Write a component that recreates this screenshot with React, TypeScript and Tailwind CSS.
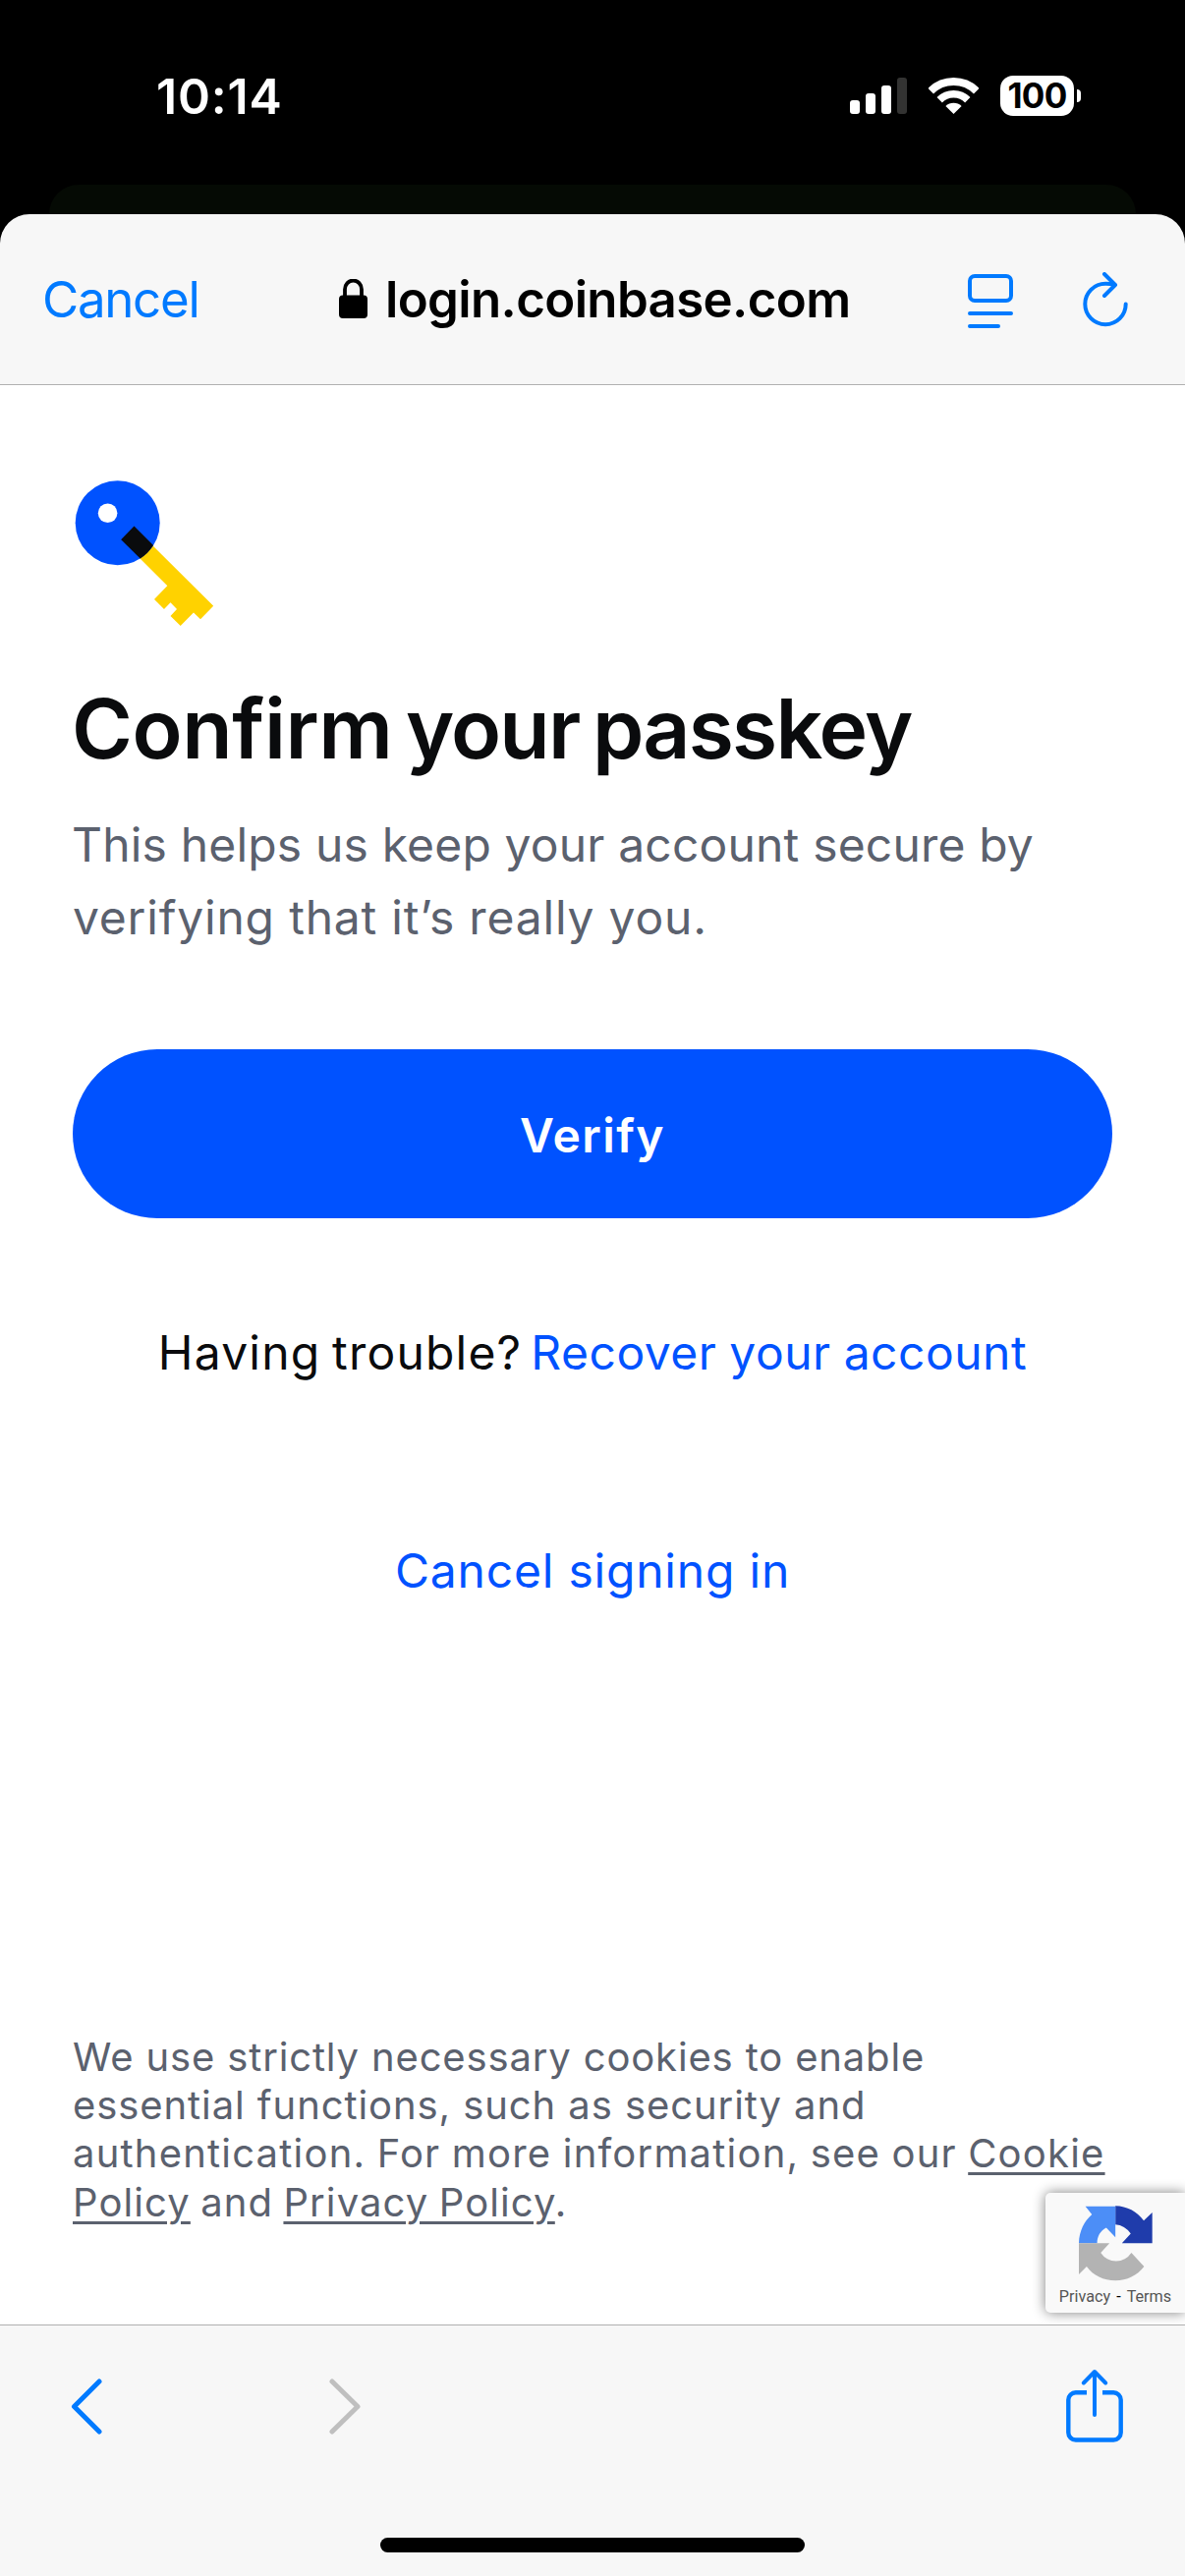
import type { ReactNode } from 'react';

function StatusBar() {
  return (
    <div className="flex h-[188px] items-start justify-between pl-[159px] pr-[106px]">
      <span className="mt-[68px] text-[50px] font-semibold leading-[60px] tracking-[0.8px] text-white">10:14</span>
      <div className="mt-[77px] flex h-[41px] items-center">
        <svg width="58" height="37" viewBox="0 0 58 37" fill="#fff">
          <rect x="0" y="23" width="10" height="14" rx="3" />
          <rect x="16" y="16" width="10" height="21" rx="3" />
          <rect x="32" y="8" width="10" height="29" rx="3" />
          <rect x="48" y="0" width="10" height="37" rx="3" fill="#333332" />
        </svg>
        <svg className="ml-[22px]" width="51" height="37" viewBox="945 79 51 37" fill="none" stroke="#fff">
          <path d="M947.2 92.7 A33 33 0 0 1 993.8 92.7" strokeWidth="8" />
          <path d="M956.2 101.7 A20.2 20.2 0 0 1 984.8 101.7" strokeWidth="7.6" />
          <path d="M970.5 116 L962.4 108 A11.6 11.6 0 0 1 978.6 108 Z" fill="#fff" stroke="none" />
        </svg>
        <div className="ml-[22px] flex h-[41px] w-[75px] items-center justify-center rounded-[13px] bg-white text-[35px] font-bold leading-[41px] tracking-[-0.8px] text-black">
          100
        </div>
        <div className="ml-[3px] h-[13px] w-[4px] rounded-r-full bg-white" />
      </div>
    </div>
  );
}

function BrowserHeader() {
  return (
    <header className="flex h-[174px] items-center rounded-t-[30px] border-b border-[#b0b0b0] bg-[#f7f7f7] pr-[57px]">
      <div className="w-[345px] pl-[43px] pt-[2px] text-[51px] tracking-[-1.3px] text-[#007aff]">Cancel</div>
      <svg className="mt-[-1px]" width="29" height="40" viewBox="0 0 29 40">
        <path d="M6 19 V10.5 A8.5 9 0 0 1 23 10.5 V19" fill="none" stroke="#000" strokeWidth="3.8" />
        <rect x="0" y="16.5" width="29" height="23.5" rx="4" />
      </svg>
      <span className="ml-[18px] pt-[2px] text-[51px] font-semibold tracking-[-0.65px] text-black">login.coinbase.com</span>
      <svg className="ml-auto mt-[3px]" width="46" height="55" viewBox="0 0 46 55" fill="none" stroke="#007aff" strokeWidth="4" strokeLinecap="round">
        <rect x="2" y="2" width="42" height="25" rx="5" />
        <path d="M2 40 H44 M2 53 H31" />
      </svg>
      <svg className="ml-[71px]" width="47" height="56" viewBox="1102 277 47 56" fill="none" stroke="#007aff" strokeWidth="4" strokeLinecap="round" strokeLinejoin="round">
        <path d="M1145.7 309.5 A20.7 20.7 0 1 1 1125 288.8 Q1130 288.7 1134.5 290" />
        <path d="M1124 279 L1135 290 L1124 301" />
      </svg>
    </header>
  );
}

function KeyArt() {
  return (
    <svg width="146" height="150" viewBox="74 488 146 150">
      <path d="M150 550 L217.2 616.7 L204 630.2 L197 623.5 L183.7 637 L173.5 627 L180 620 L173.5 613.2 L167 620 L157 610 L170.3 596.3 L138 564 Z" fill="#ffd200" />
      <circle cx="119.7" cy="532.2" r="43" fill="#0052ff" />
      <circle cx="109.6" cy="522.2" r="9.8" fill="#fff" />
      <path d="M136.5 535.5 L156 555 A43 43 0 0 1 142.7 568.5 L123.2 549.2 Z" fill="#0a0b0d" />
    </svg>
  );
}

function Line({ children, className }: { children: ReactNode; className: string }) {
  return <span className={`block whitespace-nowrap ${className}`}>{children}</span>;
}

const link = 'underline decoration-[3px] underline-offset-[5px]';

function CookieNotice() {
  return (
    <p className="mt-auto text-[40px] leading-[49.3px] text-[#5b616e]">
      <Line className="tracking-[0.85px]">We use strictly necessary cookies to enable</Line>
      <Line className="tracking-[0.92px]">essential functions, such as security and</Line>
      <Line className="tracking-[1.2px] [word-spacing:-1px]">
        authentication. For more information, see our <a className={link}>Cookie</a>
      </Line>
      <Line className="tracking-[1.1px] [word-spacing:-2px]">
        <a className={link}>Policy</a> and <a className={link}>Privacy Policy</a>.
      </Line>
    </p>
  );
}

function RecaptchaBadge() {
  return (
    <div className="absolute bottom-[12px] right-0 flex h-[122px] w-[142px] flex-col items-center rounded-l-[5px] bg-[#f9f9f9] pt-[13px] shadow-[0_0_13px_#808080]">
      <svg width="75" height="77" viewBox="174 104 226 230">
        <path d="M286 104 C322 105 352 121 373 149 L399 124 V218 H306 L333 189 Q315 163 286 161 Z" fill="#1f3cab" />
        <path d="M286 105 V200 L258 171 C240 180 230 197 230 218 H174 C175 180 191 150 214 130 L194 105 Z" fill="#4c8ef7" />
        <path d="M174 218 H268 L241 248 A56 56 0 0 0 335 248 L374 290 C352 318 322 333 286 333 C250 333 218 318 198 290 L174 314 Z" fill="#b3b3b3" />
      </svg>
      <div className="mt-[6px] flex items-center gap-[6px] font-['Roboto',sans-serif] text-[16.2px] leading-[20px] text-[#555]">
        <span>Privacy</span>
        <span className="text-black">-</span>
        <span>Terms</span>
      </div>
    </div>
  );
}

function Toolbar() {
  return (
    <footer className="flex h-[256px] flex-col justify-between border-t border-[#b0b0b0] bg-[#f7f7f7] pb-[24px]">
      <div className="flex items-start pl-[72px] pr-[63px] pt-[45px]">
        <svg className="mt-[9px]" width="32" height="57" viewBox="0 0 32 57" fill="none" stroke="#007aff" strokeWidth="5" strokeLinecap="round" strokeLinejoin="round">
          <path d="M29 3 L3.5 28.5 L29 54" />
        </svg>
        <svg className="ml-[231px] mt-[9px]" width="32" height="57" viewBox="0 0 32 57" fill="none" stroke="#bfbfbf" strokeWidth="5" strokeLinecap="round" strokeLinejoin="round">
          <path d="M3 3 L29 28.5 L3 54" />
        </svg>
        <svg className="ml-auto mt-[-1px]" width="58" height="76" viewBox="1085 2410 58 76" fill="none" stroke="#007aff" strokeWidth="4.4" strokeLinecap="round" strokeLinejoin="round">
          <path d="M1106 2434.3 H1095 A7.5 7.5 0 0 0 1087.3 2442 V2475 A7.5 7.5 0 0 0 1095 2482.5 H1133 A7.5 7.5 0 0 0 1140.7 2475 V2442 A7.5 7.5 0 0 0 1133 2434.3 H1122" strokeLinecap="butt" />
          <path d="M1114 2414 V2457 M1102.8 2424.5 L1114 2413 L1125.2 2424.5" strokeWidth="4" />
        </svg>
      </div>
      <div className="h-[15px] w-[432px] self-center rounded-full bg-black" />
    </footer>
  );
}

export default function App() {
  return (
    <div className="flex h-[2622px] w-[1206px] flex-col overflow-hidden bg-black font-['Inter',sans-serif]">
      <StatusBar />
      <div className="mx-[50px] h-[30px] rounded-t-[30px] bg-[#050a04]" />
      <BrowserHeader />
      <main className="relative flex flex-1 flex-col overflow-hidden bg-white px-[74px] pb-[100px] pt-[96px]">
        <KeyArt />
        <h1 className="ml-[-1px] mt-[54px] whitespace-nowrap text-[84px] font-semibold leading-[99px] tracking-[-1.8px] text-[#0a0b0d] [word-spacing:-6px]">
          <span className="tracking-[-0.4px]">Confirm</span> your passkey
        </h1>
        <p className="mt-[32px] text-[48px] leading-[74px] text-[#5b616e]">
          <Line className="ml-[-1px] tracking-[0.17px]">This helps us keep your account secure by</Line>
          <Line className="tracking-[0.8px]">verifying that it’s really you.</Line>
        </p>
        <button className="mt-[97px] h-[172px] shrink-0 rounded-full bg-[#0052ff] pt-[3px] text-[48px] font-semibold tracking-[1.4px] text-white">
          Verify
        </button>
        <div className="mt-[100px] flex justify-center gap-[9px] whitespace-nowrap text-[48px] leading-[74px]">
          <span className="tracking-[1.2px] text-[#0a0b0d] [word-spacing:-3px]">Having trouble?</span>
          <a className="tracking-[0.5px] text-[#0052ff] [word-spacing:-1px]">Recover your account</a>
        </div>
        <a className="mt-[148px] text-center text-[48px] leading-[74px] tracking-[0.8px] text-[#0052ff]">Cancel signing in</a>
        <CookieNotice />
        <RecaptchaBadge />
      </main>
      <Toolbar />
    </div>
  );
}
